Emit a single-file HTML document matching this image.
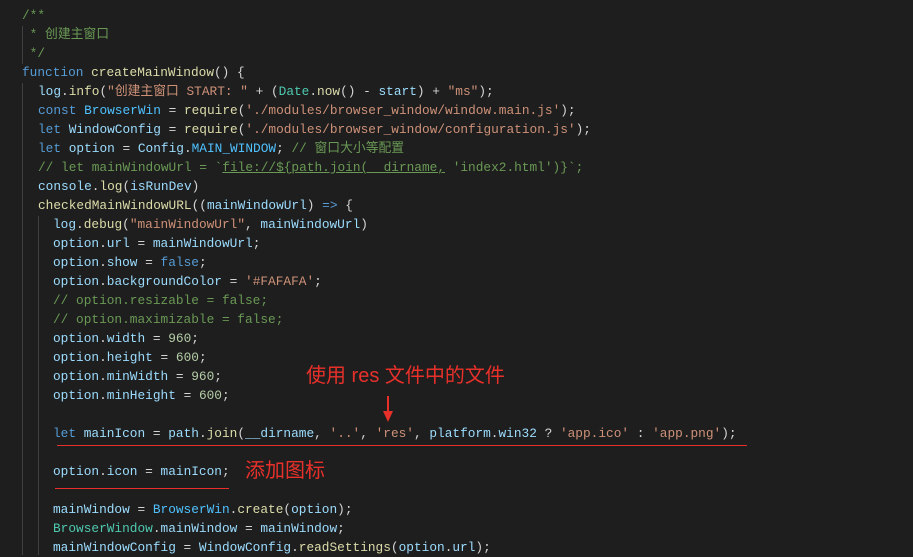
<!DOCTYPE html>
<html><head><meta charset="utf-8"><style>
body{margin:0;width:913px;height:553px;background:#1e1e1e;overflow:hidden;position:relative;font-family:"Liberation Mono","Noto Sans CJK SC",monospace;font-size:12.8px;color:#d4d4d4}
.w{position:absolute;left:0;top:2px;width:913px;height:553px}
.l{position:absolute;left:0;height:19px;line-height:19px;white-space:pre}
.g{position:absolute;width:1px;background:#404040}
.c{color:#6a9955}.k{color:#569cd6}.f{color:#dcdcaa}.v{color:#9cdcfe}.s{color:#ce9178}.n{color:#b5cea8}.t{color:#4ec9b0}.o{color:#4fc1ff}
.r{position:absolute;color:#e8302a;font-family:"Liberation Sans","Noto Sans CJK SC",sans-serif;font-size:20px;line-height:22px;white-space:nowrap}
.rl{position:absolute;height:1px;background:#e8302a}
</style></head><body><div class="w">
<div class="g" style="left:22px;top:24px;height:38px"></div>
<div class="g" style="left:22px;top:81px;height:472px"></div>
<div class="g" style="left:38px;top:214px;height:339px"></div>
<div class="l c" style="top:4px;left:22px">/**</div>
<div class="l c" style="top:23px;left:22px"> * 创建主窗口</div>
<div class="l c" style="top:42px;left:22px"> */</div>
<div class="l" style="top:61px;left:22px"><span class="k">function</span> <span class="f">createMainWindow</span>() {</div>
<div class="l" style="top:80px;left:38px"><span class="v">log</span>.<span class="f">info</span>(<span class="s">"创建主窗口 START: "</span> + (<span class="t">Date</span>.<span class="f">now</span>() - <span class="v">start</span>) + <span class="s">"ms"</span>);</div>
<div class="l" style="top:99px;left:38px"><span class="k">const</span> <span class="o">BrowserWin</span> = <span class="f">require</span>(<span class="s">'./modules/browser_window/window.main.js'</span>);</div>
<div class="l" style="top:118px;left:38px"><span class="k">let</span> <span class="v">WindowConfig</span> = <span class="f">require</span>(<span class="s">'./modules/browser_window/configuration.js'</span>);</div>
<div class="l" style="top:137px;left:38px"><span class="k">let</span> <span class="v">option</span> = <span class="v">Config</span>.<span class="o">MAIN_WINDOW</span>; <span class="c">// 窗口大小等配置</span></div>
<div class="l c" style="top:156px;left:38px">// let mainWindowUrl = `<span style="text-decoration:underline">file://${path.join(__dirname,</span> 'index2.html')}`;</div>
<div class="l" style="top:175px;left:38px"><span class="v">console</span>.<span class="f">log</span>(<span class="v">isRunDev</span>)</div>
<div class="l" style="top:194px;left:38px"><span class="f">checkedMainWindowURL</span>((<span class="v">mainWindowUrl</span>) <span class="k">=&gt;</span> {</div>
<div class="l" style="top:213px;left:53px"><span class="v">log</span>.<span class="f">debug</span>(<span class="s">"mainWindowUrl"</span>, <span class="v">mainWindowUrl</span>)</div>
<div class="l" style="top:232px;left:53px"><span class="v">option</span>.<span class="v">url</span> = <span class="v">mainWindowUrl</span>;</div>
<div class="l" style="top:251px;left:53px"><span class="v">option</span>.<span class="v">show</span> = <span class="k">false</span>;</div>
<div class="l" style="top:270px;left:53px"><span class="v">option</span>.<span class="v">backgroundColor</span> = <span class="s">'#FAFAFA'</span>;</div>
<div class="l c" style="top:289px;left:53px">// option.resizable = false;</div>
<div class="l c" style="top:308px;left:53px">// option.maximizable = false;</div>
<div class="l" style="top:327px;left:53px"><span class="v">option</span>.<span class="v">width</span> = <span class="n">960</span>;</div>
<div class="l" style="top:346px;left:53px"><span class="v">option</span>.<span class="v">height</span> = <span class="n">600</span>;</div>
<div class="l" style="top:365px;left:53px"><span class="v">option</span>.<span class="v">minWidth</span> = <span class="n">960</span>;</div>
<div class="l" style="top:384px;left:53px"><span class="v">option</span>.<span class="v">minHeight</span> = <span class="n">600</span>;</div>
<div class="l" style="top:422px;left:53px"><span class="k">let</span> <span class="v">mainIcon</span> = <span class="v">path</span>.<span class="f">join</span>(<span class="v">__dirname</span>, <span class="s">'..'</span>, <span class="s">'res'</span>, <span class="v">platform</span>.<span class="v">win32</span> ? <span class="s">'app.ico'</span> : <span class="s">'app.png'</span>);</div>
<div class="l" style="top:460px;left:53px"><span class="v">option</span>.<span class="v">icon</span> = <span class="v">mainIcon</span>;</div>
<div class="l" style="top:498px;left:53px"><span class="v">mainWindow</span> = <span class="o">BrowserWin</span>.<span class="f">create</span>(<span class="v">option</span>);</div>
<div class="l" style="top:517px;left:53px"><span class="t">BrowserWindow</span>.<span class="v">mainWindow</span> = <span class="v">mainWindow</span>;</div>
<div class="l" style="top:536px;left:53px"><span class="v">mainWindowConfig</span> = <span class="v">WindowConfig</span>.<span class="f">readSettings</span>(<span class="v">option</span>.<span class="v">url</span>);</div>
</div>
<div class="r" style="left:306px;top:365px">使用 res 文件中的文件</div>
<svg style="position:absolute;left:382px;top:396px" width="12" height="28"><line x1="6" y1="0" x2="6" y2="18" stroke="#e8302a" stroke-width="2"/><polygon points="1,15 11,15 6,26" fill="#e8302a"/></svg>
<div class="rl" style="left:57px;top:445px;width:690px"></div>
<div class="r" style="left:245px;top:460px">添加图标</div>
<div class="rl" style="left:55px;top:488px;width:174px"></div>
</body></html>
